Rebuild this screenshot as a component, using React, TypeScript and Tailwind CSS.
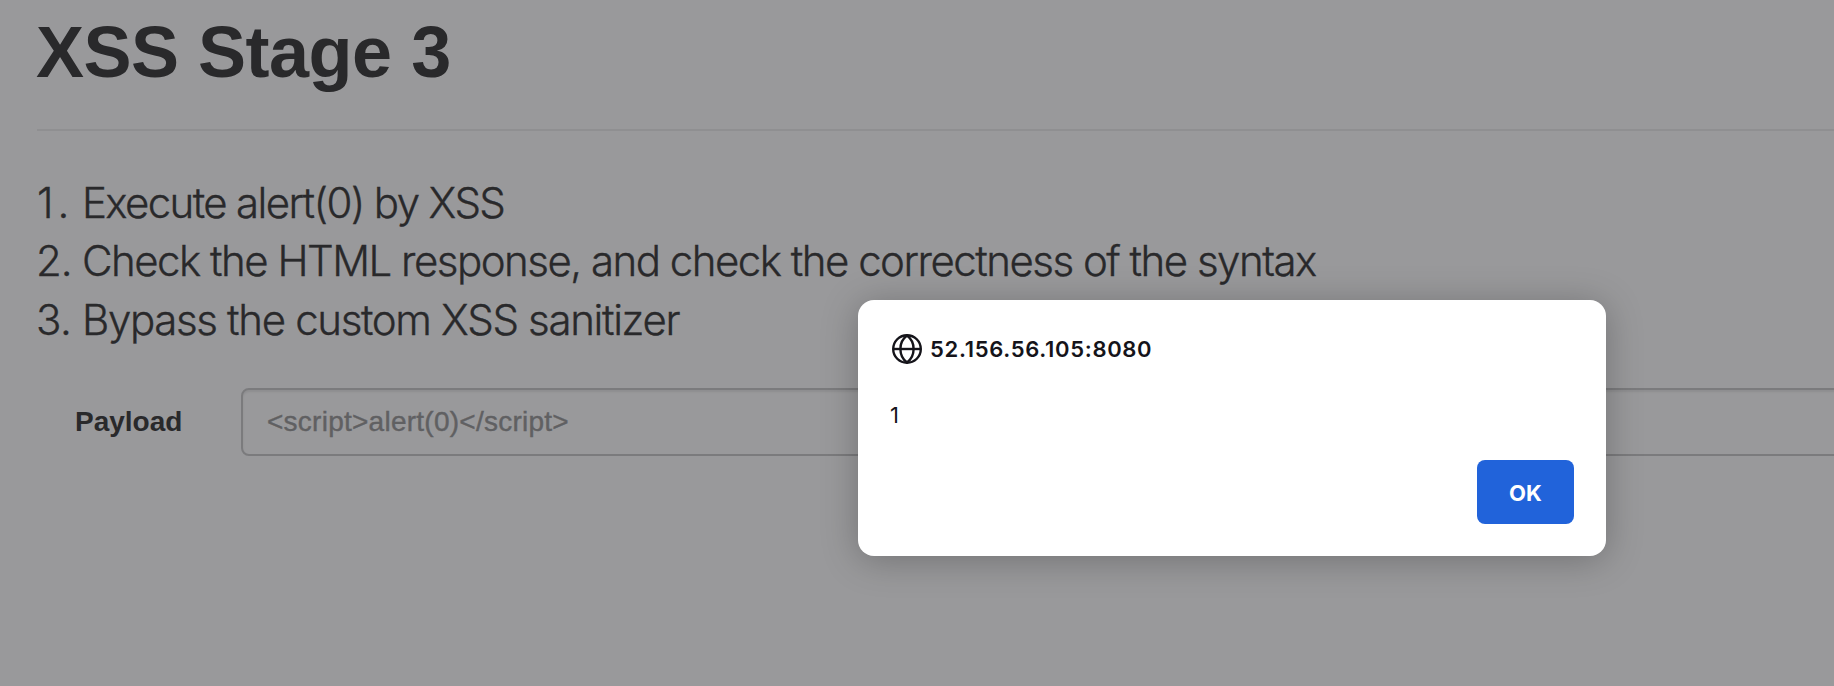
const tasks = [
  { number: "1.", text: "Execute alert(0) by XSS", numberClass: "pl-px tracking-[4px]", spacing: "tracking-[-1.64px]" },
  {
    number: "2.",
    text: "Check the HTML response, and check the correctness of the syntax",
    numberClass: "tracking-[-1px]",
    spacing: "tracking-[-1.51px]",
  },
  { number: "3.", text: "Bypass the custom XSS sanitizer", numberClass: "tracking-[-0.5px]", spacing: "tracking-[-1.35px]" },
];

function GlobeIcon() {
  return (
    <svg className="ml-px size-8 shrink-0" viewBox="0 0 32 32" fill="none" stroke="#15141a" strokeWidth="2.4">
      <circle cx="16" cy="16" r="13.8" />
      <path d="M2.500 16h27" />
      <path d="M16 2.500C11.300 6 9.400 10.700 9.400 16s1.900 10 6.600 13.500C20.700 26 22.600 21.300 22.600 16S20.700 6 16 2.500Z" />
    </svg>
  );
}

function AlertDialog() {
  return (
    <div
      role="alertdialog"
      className="absolute top-[300px] left-[858px] flex h-[256px] w-[748px] flex-col rounded-[16px] bg-white p-8 font-['Inter',sans-serif] text-[22px] leading-8 text-[#15141a] shadow-[0_4px_36px_rgba(0,0,0,0.26)]"
    >
      <div className="flex items-center gap-[7px] pt-[1px]">
        <GlobeIcon />
        <span className="font-semibold tracking-[0.68px]">52.156.56.105:8080</span>
      </div>
      <p className="mt-[34px]">1</p>
      <button className="mt-auto h-16 w-[97px] self-end rounded-lg bg-[#2163da] pt-px font-bold text-white">OK</button>
    </div>
  );
}

export default function App() {
  return (
    <main className="relative h-[686px] w-full overflow-hidden bg-[#99999b] pl-[37px] font-['Liberation_Sans',Arial,sans-serif] text-[#29292b]">
      <h1 className="-ml-px h-[129px] pt-[12px] text-[72px] leading-[80px] font-bold tracking-[-0.5px]">XSS Stage 3</h1>
      <hr className="border-0 border-t-2 border-[#8f8f91]" />
      <div className="pt-[42.5px] font-['Inter',sans-serif] text-[42px] leading-[58.5px] font-light [-webkit-text-stroke:0.35px_#29292b]">
        {tasks.map((task) => (
          <div key={task.number} className="-ml-px flex whitespace-nowrap">
            <span className={`w-[46px] ${task.numberClass}`}>{task.number}</span>
            <span className={task.spacing}>{task.text}</span>
          </div>
        ))}
      </div>
      <form className="-mr-2 mt-[38.5px] flex items-center">
        <label htmlFor="payload" className="w-[204px] pt-px pl-[38px] text-[28px] font-bold">
          Payload
        </label>
        <input
          id="payload"
          placeholder="<script>alert(0)</script>"
          className="h-[68px] grow rounded-[8px] border-2 border-[#7b7b7d] bg-transparent px-6 pt-px text-[28px] tracking-[0.25px] shadow-[inset_0_2px_2px_rgba(0,0,0,0.075)] [-webkit-text-stroke:0.4px_#606062] placeholder:text-[#606062]"
        />
      </form>
      <AlertDialog />
    </main>
  );
}
